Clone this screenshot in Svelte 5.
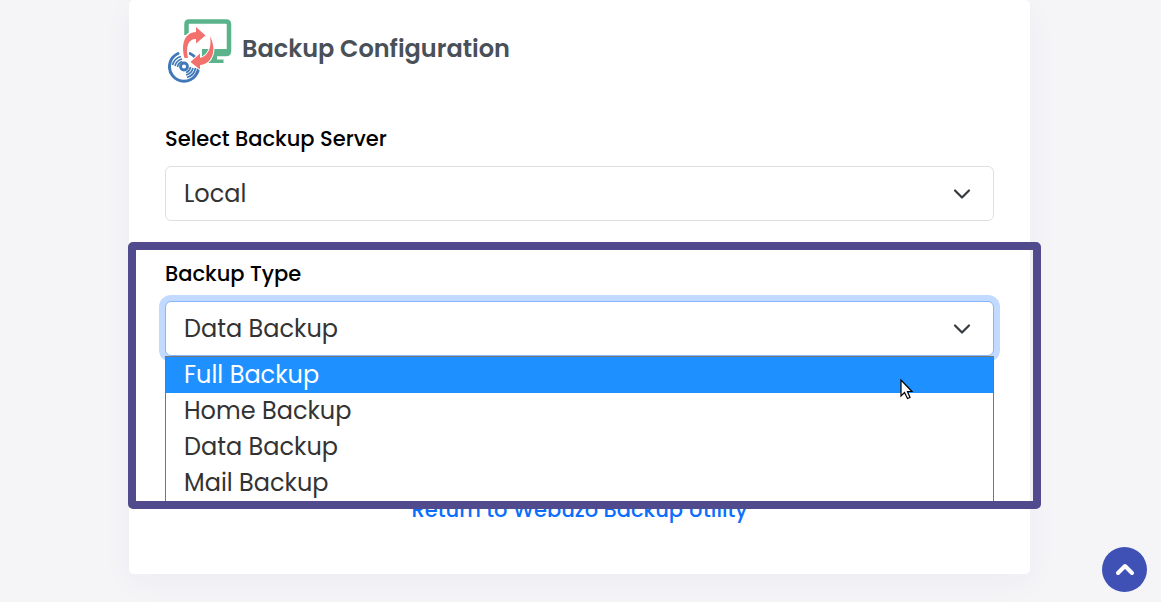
<script>
  const servers = ["Local"];
  const types = ["Full Backup", "Home Backup", "Data Backup", "Mail Backup"];

  let server = $state("Local");
  let type = $state("Data Backup");
  let active = $state("Full Backup");
</script>

{#snippet chevron()}
  <svg class="chevron" viewBox="0 0 18 18" aria-hidden="true">
    <path d="M2 5.5l7 7 7-7" />
  </svg>
{/snippet}

<div class="page">
  <main class="card">
    <header>
      <svg class="logo" viewBox="0 0 64 64" aria-hidden="true">
        <!-- monitor -->
        <path
          d="M18.500 16V5Q18.500 2.500 21 2.500H58Q61 2.500 61 5.500V32Q61 35 58 35H34"
          fill="none"
          stroke="#5bb38c"
          stroke-width="4.500"
        />
        <path d="M25 30H62V33Q62 37 58 37H49V40.500H55.500V44H34V30z" fill="#5bb38c" />
        <!-- disc -->
        <circle cx="16" cy="48" r="15" fill="#fff" />
        <path
          d="M22 34.500A14.500 14.500 0 1 1 10 34.500"
          fill="none"
          stroke="#4079b8"
          stroke-width="3"
          stroke-linecap="round"
        />
        <circle cx="16" cy="47.500" r="3.500" fill="none" stroke="#4079b8" stroke-width="2.800" />
        <path
          d="M4.500 46A12 12 0 0 1 13 37.500M7 47A9.500 9.500 0 0 1 14 40M9.500 48A7 7 0 0 1 14 42.500M27.500 49A12 12 0 0 1 19 58.500M25 49A9.500 9.500 0 0 1 18 56M22.500 48A7 7 0 0 1 18 53.500"
          fill="none"
          stroke="#4079b8"
          stroke-width="1.700"
        />
        <!-- arrows -->
        <path
          d="M16.500 39C13 25 16 14 28 13V8L37.500 16.500L28 24.500V20C20 20 17.500 28 20 39z"
          fill="#f3716d"
          stroke="#fff"
          stroke-width="3"
          paint-order="stroke"
        />
        <path
          d="M42 17.500C49 30 45 45 32 46V50.500L22.500 43L32 34.500V39C40 37 44 29 42 17.500z"
          fill="#f3716d"
          stroke="#fff"
          stroke-width="2"
          paint-order="stroke"
        />
      </svg>
      <h1>Backup Configuration</h1>
    </header>

    <div class="field">
      <label for="server">Select Backup Server</label>
      <div class="control">
        <select id="server" bind:value={server}>
          {#each servers as name}
            <option>{name}</option>
          {/each}
        </select>
        {@render chevron()}
      </div>
    </div>

    <section class="highlight">
      <div class="field">
        <label for="type">Backup Type</label>
        <div class="control">
          <select id="type" class="open" bind:value={type}>
            {#each types as name}
              <option>{name}</option>
            {/each}
          </select>
          {@render chevron()}
        </div>
      </div>
      <ul class="menu" role="listbox" aria-label="Backup Type">
        {#each types as name}
          <!-- svelte-ignore a11y_click_events_have_key_events -->
          <li
            role="option"
            tabindex="-1"
            class:active={name === active}
            aria-selected={name === type}
            onmouseenter={() => (active = name)}
            onclick={() => (type = name)}
          >
            {name}
          </li>
        {/each}
        <svg class="pointer" viewBox="0 0 14 22" aria-hidden="true">
          <path d="M1 1v16l3.500-3.500 3 6 2.500-1-2.500-6h4.500z" />
        </svg>
      </ul>
    </section>

    <a class="back" href="#backup">Return to Webuzo Backup Utility</a>
  </main>

  <button class="to-top" aria-label="Back to top">
    <svg viewBox="0 0 20 14" aria-hidden="true">
      <path d="M3 10l7-7 7 7" />
    </svg>
  </button>
</div>

<style>
  :global(body) {
    background: #f5f5f8;
  }
  .page {
    padding: 0 131px 28px 129px;
    font-family: Poppins, Inter, sans-serif;
    color: #333;
  }
  .card {
    padding: 19px 36px 48px;
    background: #fff;
    border-radius: 5px;
    box-shadow: 0 8px 32px rgba(40, 40, 90, 0.04);
  }
  header {
    display: flex;
    align-items: center;
    gap: 10px;
    margin: 0 3px 40px;
  }
  .logo {
    width: 64px;
    height: 64px;
  }
  h1 {
    margin: 0 0 4px;
    color: #495057;
    font-size: 24px;
    font-weight: 600;
    line-height: 36px;
  }
  label {
    display: block;
    margin-bottom: 11px;
    color: #000;
    font-size: 21px;
    font-weight: 500;
    line-height: 32px;
  }
  .control {
    display: grid;
    align-items: center;
  }
  select {
    grid-area: 1 / 1;
    appearance: none;
    box-sizing: border-box;
    width: 100%;
    height: 55px;
    padding: 0 54px 0 18px;
    background: #fff;
    border: 1px solid #dfdfe2;
    border-radius: 6px;
    color: #333;
    font: inherit;
    font-size: 24px;
  }
  select.open {
    border-color: #86b7fe;
    box-shadow: 0 0 0 6px #c2daff;
    outline: none;
  }
  .chevron {
    grid-area: 1 / 1;
    justify-self: end;
    width: 18px;
    height: 18px;
    margin-right: 23px;
    pointer-events: none;
  }
  .chevron path {
    fill: none;
    stroke: #343a40;
    stroke-width: 2.2;
    stroke-linecap: round;
    stroke-linejoin: round;
  }
  /* frame reaches past the card edge, over the link below */
  .highlight {
    position: relative;
    z-index: 1;
    margin: 21px -47px 0 -37px;
    padding: 8px 39px 0 29px;
    border: 8px solid #514a8d;
    border-radius: 5px;
  }
  .menu {
    position: relative;
    margin: 0;
    padding: 0;
    background: #fff;
    border: 1px solid #767676;
    border-bottom: 0;
    list-style: none;
  }
  .menu li {
    padding: 0 18px;
    font-size: 24px;
    line-height: 36px;
  }
  .menu .active {
    background: #1e90ff;
    color: #fff;
  }
  .pointer {
    position: absolute;
    top: 22px;
    right: 79px;
    width: 14px;
    height: 22px;
    pointer-events: none;
  }
  .pointer path {
    fill: #fff;
    stroke: #000;
    stroke-width: 1.2;
  }
  .back {
    display: block;
    margin-top: -15px;
    color: #0d6efd;
    font-size: 21px;
    font-weight: 500;
    line-height: 32px;
    text-align: center;
    text-decoration: none;
  }
  .to-top {
    position: fixed;
    right: 14px;
    bottom: 10px;
    display: grid;
    place-items: center;
    width: 45px;
    height: 45px;
    padding: 0;
    background: #3f51b5;
    border: 0;
    border-radius: 50%;
  }
  .to-top svg {
    width: 20px;
    height: 14px;
  }
  .to-top path {
    fill: none;
    stroke: #fff;
    stroke-width: 4;
    stroke-linecap: round;
    stroke-linejoin: round;
  }
</style>
